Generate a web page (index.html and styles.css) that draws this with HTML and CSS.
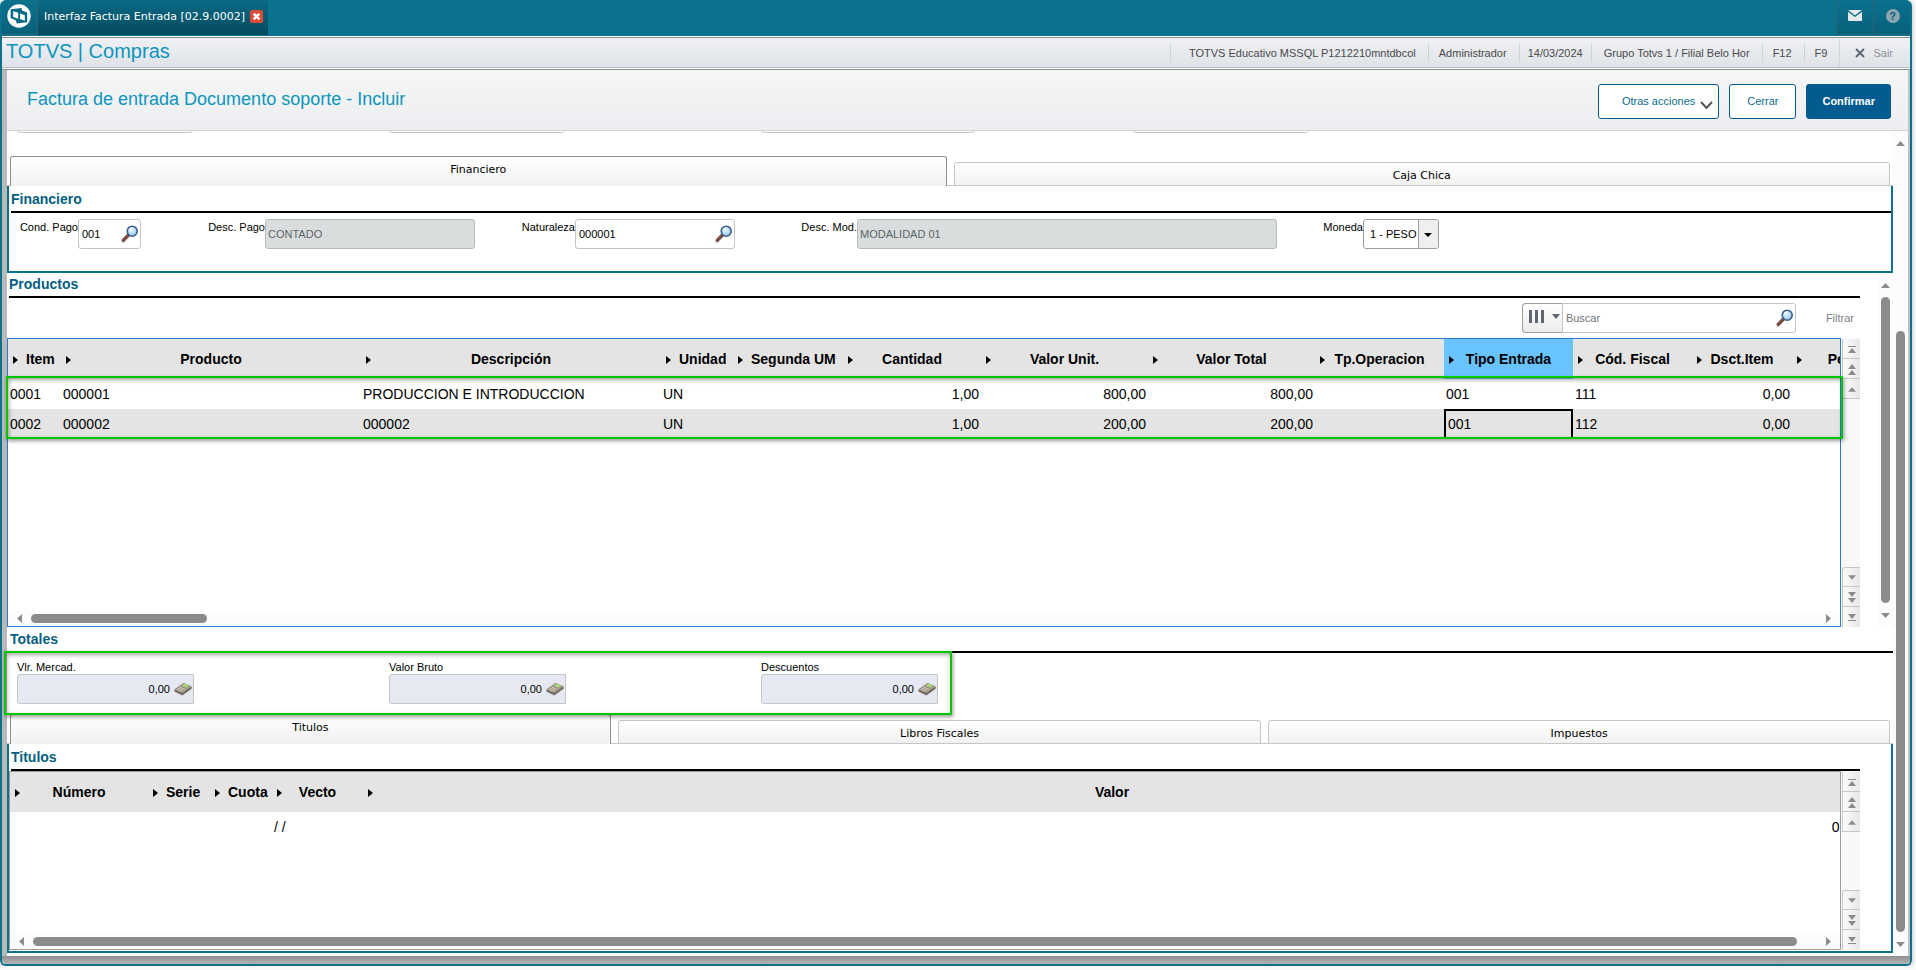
FILE: index.html
```html
<!DOCTYPE html>
<html lang="es">
	<head>
		<meta charset="UTF-8">
		<meta content="width=device-width, initial-scale=1.0" name="viewport">
		<title>TOTVS | Compras</title>
		<link rel="stylesheet" href="styles.css">
	</head>
	<body>
		<!-- shared icons -->
		<svg class="defs" width="0" height="0" aria-hidden="true">
			<defs>
				<radialGradient id="lens" cx=".45" cy=".4" r=".6">
					<stop offset="0" stop-color="#eef8ff"/>
					<stop offset="1" stop-color="#8fc3e8"/>
				</radialGradient>
			</defs>
			<symbol id="i-search" viewBox="0 0 18 18">
				<path d="M2 16.2l5-5.4" stroke="#00000030" stroke-width="4" stroke-linecap="round"/>
				<path d="M2.4 15.2l4.8-5" stroke="#6a4238" stroke-width="3.2" stroke-linecap="round"/>
				<path d="M2.2 14.6l4.4-4.6" stroke="#a0705c" stroke-width="1"/>
				<circle cx="11.2" cy="6.2" r="5" fill="url(#lens)" stroke="#3c5f8c" stroke-width="1.6"/>
				<path d="M8.4 5.6a3 3 0 0 1 3-2.6" stroke="#fff" stroke-width="1.2" fill="none"/>
			</symbol>
			<symbol id="i-calc" viewBox="0 0 18 14">
				<path d="M1 10l7 4 10-7-1-2z" fill="#00000030"/>
				<path d="M0.5 7.5L9.5 1l8 3.5v2l-9 6.5-8-3.5z" fill="#6e6458"/>
				<path d="M0.5 7.5L9.5 1l8 3.5-9 6.5z" fill="#a39a8c"/>
				<path d="M8 3.6l2.6-1.8 4.6 2-2.6 1.8z" fill="#a8e070"/>
				<path d="M4.4 6.4l4.6 2M6 5.3l4.6 2M3 7.6l4.6 2" stroke="#e4ded2" stroke-width="1" stroke-dasharray="1.4 .8"/>
			</symbol>
			<symbol id="i-up" viewBox="0 0 9 5"><path d="M0 5h9L4.5 0z"/></symbol>
			<symbol id="i-down" viewBox="0 0 9 5"><path d="M0 0h9L4.5 5z"/></symbol>
			<symbol id="i-left" viewBox="0 0 5 9"><path d="M5 0v9L0 4.5z"/></symbol>
			<symbol id="i-right" viewBox="0 0 5 9"><path d="M0 0v9l5-4.5z"/></symbol>
			<symbol id="i-first" viewBox="0 0 8 7"><path d="M0 0h8v1H0zM0 7h8L4 2z"/></symbol>
			<symbol id="i-last" viewBox="0 0 8 7"><path d="M0 6h8v1H0zM0 0h8L4 5z"/></symbol>
			<symbol id="i-up2" viewBox="0 0 8 11"><path d="M0 5h8L4 0zM0 11h8L4 6z"/></symbol>
			<symbol id="i-down2" viewBox="0 0 8 11"><path d="M0 0h8L4 5zM0 6h8l-4 5z"/></symbol>
		</svg>

		<div class="window">
			<header class="titlebar">
				<button class="tile" aria-label="Inicio">
					<svg width="24" height="24" viewBox="0 0 24 24">
						<circle cx="12" cy="12" r="11.7" fill="#fff"/>
						<path d="M3.6 5.2L14.6 4l.4 2.6 5.2 2v9.6l-10.6 1.2-.6-2.8-5.4-2.6z" fill="#0b6b87"/>
						<path d="M6.2 7.2l5 1.6v6l-5-1.8z" fill="#fff"/>
						<path d="M13 9.6l4.8 1.6v5.6L13 15z" fill="#fff"/>
						<path d="M12.4 6.6v11" stroke="#0b6b87" stroke-width="1.2"/>
					</svg>
				</button>
				<div class="apptab">
					<span>Interfaz Factura Entrada [02.9.0002]</span>
					<button class="close" aria-label="Cerrar pestaña">
						<svg width="13" height="13" viewBox="0 0 13 13">
							<rect width="13" height="13" rx="2.5" fill="#dd4b36"/>
							<path d="M3.6 3.6l5.8 5.8M9.4 3.6L3.6 9.4" stroke="#fff" stroke-width="2.4"/>
						</svg>
					</button>
				</div>
				<button class="tile mail" aria-label="Mensajes">
					<svg width="14" height="11" viewBox="0 0 14 11">
						<rect width="14" height="11" rx="1" fill="#e4eaec"/>
						<path d="M0 .8l7 5.4L14 .8" stroke="#0b6b87" stroke-width="1.4" fill="none"/>
					</svg>
				</button>
				<button class="tile" aria-label="Ayuda"><span class="help">?</span></button>
			</header>

			<div class="appbar">
				<h1>TOTVS | Compras</h1>
				<ul class="session">
					<li>TOTVS Educativo MSSQL P1212210mntdbcol</li>
					<li>Administrador</li>
					<li>14/03/2024</li>
					<li>Grupo Totvs 1 / Filial Belo Hor</li>
					<li>F12</li>
					<li>F9</li>
				</ul>
				<button class="exit">
					<svg width="10" height="10" viewBox="0 0 10 10"><path d="M1 1l8 8M9 1L1 9" stroke="#5f6774" stroke-width="2"/></svg>
					Sair
				</button>
			</div>

			<main class="sheet">
				<div class="pagehead">
					<h2>Factura de entrada Documento soporte - Incluir</h2>
					<button class="btn btn-more">Otras acciones
						<svg width="13" height="8" viewBox="0 0 13 8"><path d="M1 1l5.5 6L12 1" stroke="#555" stroke-width="2" fill="none"/></svg>
					</button>
					<button class="btn">Cerrar</button>
					<button class="btn btn-main">Confirmar</button>
				</div>

				<div class="scroller">
					<div class="content">
						<!-- fields scrolled out of view, only their lower edge shows -->
						<div class="fieldgrid scrolled">
							<input aria-label="Campo 1" readonly>
							<input aria-label="Campo 2" readonly>
							<input class="wide" aria-label="Campo 3" readonly>
							<input aria-label="Campo 4" readonly>
						</div>

						<div class="tabs" role="tablist">
							<button class="tab active" role="tab" aria-selected="true">Financiero</button>
							<button class="tab" role="tab">Caja Chica</button>
						</div>
						<section class="panel">
							<h3>Financiero</h3>
							<div class="form">
								<label for="cond">Cond. Pago</label>
								<div class="box"><input id="cond" value="001"><button aria-label="Buscar condición"><svg width="18" height="18"><use href="#i-search"/></svg></button></div>
								<label for="desc">Desc. Pago</label>
								<div class="box off"><input id="desc" value="CONTADO" readonly></div>
								<label for="nat">Naturaleza</label>
								<div class="box"><input id="nat" value="000001"><button aria-label="Buscar naturaleza"><svg width="18" height="18"><use href="#i-search"/></svg></button></div>
								<label for="mod">Desc. Mod.</label>
								<div class="box off"><input id="mod" value="MODALIDAD 01" readonly></div>
								<label for="moneda">Moneda</label>
								<div class="box picker"><select id="moneda"><option>1 - PESO</option></select></div>
							</div>
						</section>

						<section class="products">
							<div class="main">
								<h3>Productos</h3>
								<div class="toolbar">
									<button class="columns" aria-label="Columnas">
										<svg width="31" height="13" viewBox="0 0 31 13" fill="#5f6774"><path d="M0 0h3v13H0zM6 0h3v13H6zM12 0h3v13h-3zM23 4h8l-4 5z"/></svg>
									</button>
									<div class="box search"><input aria-label="Buscar" placeholder="Buscar"><button aria-label="Buscar producto"><svg width="18" height="18"><use href="#i-search"/></svg></button></div>
									<button class="filter">Filtrar</button>
								</div>
								<div class="gridwrap">
									<div class="grid focus">
										<div class="rows">
											<table>
												<colgroup>
													<col class="w53"><col class="w300"><col class="w300"><col class="w72"><col class="w110"><col class="w138"><col class="w167"><col class="w167"><col class="w129"><col class="w129"><col class="w119"><col class="w100"><col class="w105">
												</colgroup>
												<thead>
													<tr><th class="tight">Item</th><th>Producto</th><th>Descripción</th><th class="tight">Unidad</th><th class="tight">Segunda UM</th><th>Cantidad</th><th>Valor Unit.</th><th>Valor Total</th><th>Tp.Operacion</th><th class="sel">Tipo Entrada</th><th>Cód. Fiscal</th><th>Dsct.Item</th><th>Peso</th></tr>
												</thead>
												<tbody>
													<tr><td>0001</td><td>000001</td><td>PRODUCCION E INTRODUCCION</td><td>UN</td><td></td><td class="num">1,00</td><td class="num">800,00</td><td class="num">800,00</td><td></td><td>001</td><td>111</td><td class="num">0,00</td><td></td></tr>
													<tr><td>0002</td><td>000002</td><td>000002</td><td>UN</td><td></td><td class="num">1,00</td><td class="num">200,00</td><td class="num">200,00</td><td></td><td class="cursor">001</td><td>112</td><td class="num">0,00</td><td></td></tr>
												</tbody>
											</table>
										</div>
										<div class="hscroll">
											<button aria-label="Izquierda"><svg width="5" height="9"><use href="#i-left"/></svg></button>
											<div class="track"><div class="thumb" style="width: 9.85%"></div></div>
											<button aria-label="Derecha"><svg width="5" height="9"><use href="#i-right"/></svg></button>
										</div>
									</div>
									<div class="pager">
										<button aria-label="Primero"><svg width="8" height="7"><use href="#i-first"/></svg></button>
										<button aria-label="Página anterior"><svg width="8" height="11"><use href="#i-up2"/></svg></button>
										<button aria-label="Anterior"><svg width="8" height="5"><use href="#i-up"/></svg></button>
										<span></span>
										<button aria-label="Siguiente"><svg width="8" height="5"><use href="#i-down"/></svg></button>
										<button aria-label="Página siguiente"><svg width="8" height="11"><use href="#i-down2"/></svg></button>
										<button aria-label="Último"><svg width="8" height="7"><use href="#i-last"/></svg></button>
									</div>
									<div class="mark mark-rows"></div>
								</div>
							</div>
							<div class="vscroll">
								<button aria-label="Arriba"><svg width="9" height="5"><use href="#i-up"/></svg></button>
								<div class="track"><div class="thumb" style="height: 100%"></div></div>
								<button aria-label="Abajo"><svg width="9" height="5"><use href="#i-down"/></svg></button>
							</div>
						</section>

						<section class="totals">
							<h3>Totales</h3>
							<div class="fieldgrid">
								<div class="total">
									<label for="mercad">Vlr. Mercad.</label>
									<div class="box calc"><input id="mercad" value="0,00"><button aria-label="Calculadora"><svg width="18" height="14"><use href="#i-calc"/></svg></button></div>
								</div>
								<div class="total">
									<label for="bruto">Valor Bruto</label>
									<div class="box calc"><input id="bruto" value="0,00"><button aria-label="Calculadora"><svg width="18" height="14"><use href="#i-calc"/></svg></button></div>
								</div>
								<div class="total">
									<label for="descuentos">Descuentos</label>
									<div class="box calc"><input id="descuentos" value="0,00"><button aria-label="Calculadora"><svg width="18" height="14"><use href="#i-calc"/></svg></button></div>
								</div>
							</div>
							<div class="mark mark-totals"></div>
						</section>

						<div class="tabs tabs-low" role="tablist">
							<button class="tab active" role="tab" aria-selected="true">Titulos</button>
							<button class="tab" role="tab">Libros Fiscales</button>
							<button class="tab" role="tab">Impuestos</button>
						</div>
						<section class="panel panel-low">
							<h3>Titulos</h3>
							<div class="gridwrap low">
								<div class="grid">
									<div class="rows">
										<table>
											<colgroup><col class="w138"><col class="w62"><col class="w62"><col class="w91"><col class="rest"></colgroup>
											<thead>
												<tr><th>Número</th><th class="tight">Serie</th><th class="tight">Cuota</th><th>Vecto</th><th>Valor</th></tr>
											</thead>
											<tbody>
												<tr><td></td><td></td><td></td><td>/ /</td><td class="num">0,00</td></tr>
											</tbody>
										</table>
									</div>
									<div class="hscroll">
										<button aria-label="Izquierda"><svg width="5" height="9"><use href="#i-left"/></svg></button>
										<div class="track"><div class="thumb" style="width: 98.9%"></div></div>
										<button aria-label="Derecha"><svg width="5" height="9"><use href="#i-right"/></svg></button>
									</div>
								</div>
								<div class="pager">
									<button aria-label="Primero"><svg width="8" height="7"><use href="#i-first"/></svg></button>
									<button aria-label="Página anterior"><svg width="8" height="11"><use href="#i-up2"/></svg></button>
									<button aria-label="Anterior"><svg width="8" height="5"><use href="#i-up"/></svg></button>
									<span></span>
									<button aria-label="Siguiente"><svg width="8" height="5"><use href="#i-down"/></svg></button>
									<button aria-label="Página siguiente"><svg width="8" height="11"><use href="#i-down2"/></svg></button>
									<button aria-label="Último"><svg width="8" height="7"><use href="#i-last"/></svg></button>
								</div>
							</div>
						</section>
					</div>
					<div class="vscroll">
						<button aria-label="Arriba"><svg width="9" height="5"><use href="#i-up"/></svg></button>
						<div class="track end"><div class="thumb" style="height: 77.4%"></div></div>
						<button aria-label="Abajo"><svg width="9" height="5"><use href="#i-down"/></svg></button>
					</div>
				</div>
			</main>
		</div>
	</body>
</html>
```
FILE: styles.css
```css
* { box-sizing: border-box; }
body, h1, h2, h3, ul { margin: 0; padding: 0; }
body {
	background: #f9f9f9;
	color: #000;
	font: 11px/14px "Liberation Sans", Arial, sans-serif;
}
button, input, select {
	font: inherit;
	color: inherit;
	background: none;
	border: 0;
	border-radius: 0;
	margin: 0;
	padding: 0;
	min-width: 0;
}
svg { display: block; fill: #8b8b8b; }
.defs { position: absolute; }

.window {
	display: flex;
	flex-direction: column;
	min-height: calc(100vh - 4px);
	margin-right: 4px;
	border: 2px solid #0b728e;
	border-top: 0;
	border-radius: 6px;
	background: #fff;
	box-shadow: 0 1px 4px rgba(0, 0, 0, .3);
	overflow: hidden;
}

/* title bar */
.titlebar {
	display: flex;
	height: 36px;
	margin: 0 -2px;
	padding-bottom: 1px;
	background: #0b728e;
}
.tile {
	display: flex;
	align-items: center;
	justify-content: center;
	width: 38px;
	padding-bottom: 3px;
	border: 1px solid #2b6577;
	border-width: 0 1px 1px 0;
	background: linear-gradient(#0b728e, #08617a);
}
.mail {
	margin-left: auto;
	border-left-width: 1px;
}
.apptab {
	display: flex;
	align-items: center;
	gap: 5px;
	padding: 0 5px 2px 6px;
	background: linear-gradient(#0a6b86, #054a5d);
	color: #fff;
	font: 11px/14px "DejaVu Sans", Verdana, sans-serif;
}
.help {
	width: 14px;
	height: 14px;
	border-radius: 7px;
	background: #8ba6b0;
	color: #0b5b73;
	font-weight: bold;
}

/* application bar */
.appbar {
	display: flex;
	align-items: center;
	height: 34px;
	border-top: 1px solid #fff;
	border-bottom: 1px solid #8c8e90;
	background: linear-gradient(#8c8e90 1px, #eff0f4 1px, #dfe3e8 30px, #b9bdbf 30px, #b9bdbf 31px, #fff 31px);
}
h1, h2 {
	color: #0d95bd;
	font-weight: normal;
}
h1 {
	flex: 1;
	padding: 0 0 4px 4px;
	font-size: 20px;
	line-height: 24px;
}
.session {
	display: flex;
	list-style: none;
	color: #4a4a4a;
}
.session li {
	padding: 2px 12px 2px 10px;
	border-left: 1px solid #d0d3d8;
}
.session li:first-child { padding-left: 18px; }
.session li:nth-child(3) { padding: 2px 8px; }
.session li:nth-child(4) { padding: 2px 12px; }
.exit {
	display: flex;
	align-items: center;
	gap: 8px;
	height: 28px;
	padding: 0 17px 0 15px;
	border-left: 1px solid #d0d3d8;
	color: #8f9398;
}

/* sheet */
.sheet {
	flex: 1;
	display: flex;
	flex-direction: column;
	padding: 0 2px 8px 5px;
	background: linear-gradient(transparent calc(100% - 8px), #8e8e8e calc(100% - 8px), #b4b4b4), linear-gradient(90deg, #b9b9b9, #c2c2c2);
}
.pagehead {
	display: flex;
	align-items: center;
	gap: 10px;
	height: 61px;
	padding: 2px 17px 0 20px;
	border-bottom: 1px solid #d2d3d4;
	background: linear-gradient(#f5f7f6, #ecedf0);
}
h2 {
	flex: 1;
	padding-bottom: 4px;
	font-size: 18px;
	line-height: 20px;
}
.btn {
	height: 35px;
	padding: 0 17px;
	border: 1px solid #045b8f;
	border-radius: 3px;
	background: #fff;
	color: #0d6c8c;
}
.btn-more {
	display: flex;
	align-items: center;
	gap: 5px;
	padding: 0 5px 0 23px;
}
.btn-more svg { margin-top: 8px; }
.btn-main {
	padding: 0 15px;
	background: #045b8f;
	color: #fff;
	font-weight: bold;
}
.scroller {
	flex: 1;
	display: flex;
	background: #fff;
}
.content {
	flex: 1;
	min-width: 0;
}

/* fields */
.fieldgrid {
	display: grid;
	grid-template-columns: repeat(4, 372px);
	padding-left: 10px;
}
.scrolled {
	height: 2px;
	margin-bottom: 23px;
	align-items: end;
	align-content: end;
	overflow: hidden;
}
.scrolled input {
	width: 176px;
	height: 30px;
	border: 1px solid #c4c7cb;
	border-radius: 3px;
}
.scrolled .wide { width: 214px; }
.box {
	display: flex;
	align-items: center;
	height: 30px;
	padding: 0 1px 0 3px;
	border: 1px solid #c2c4c6;
	border-radius: 3px;
	background: #fff;
}
.box input {
	flex: 1;
	width: 0;
}
.box input::placeholder {
	color: #6f7478;
	opacity: 1;
}
.off {
	padding-left: 2px;
	border-color: #b4babb;
	background: #d9dddd;
	color: #5c6669;
}
.calc {
	width: 177px;
	border-radius: 3px 0 0 3px;
	background: #e6e9f2;
}
.calc input {
	padding-right: 4px;
	text-align: right;
}
.picker {
	position: relative;
	padding: 0;
	border-color: #9b9fa2;
}
.picker select {
	appearance: none;
	flex: 1;
	height: 28px;
	padding-left: 6px;
	border-radius: 3px;
	background: linear-gradient(90deg, transparent calc(100% - 20px), #9b9fa2 calc(100% - 20px), #9b9fa2 calc(100% - 19px), #efefef calc(100% - 19px));
}
.picker::after {
	content: "";
	position: absolute;
	right: 6px;
	top: 13px;
	border: 4px solid transparent;
	border-top-color: #000;
	border-bottom: 0;
	pointer-events: none;
}

/* tabs and panels */
.tabs {
	display: flex;
	align-items: flex-end;
	gap: 7px;
	height: 30px;
	padding: 0 3px;
	background: linear-gradient(#c6c6c6, #c6c6c6) left bottom / 100% 1px no-repeat;
}
.tab {
	flex: 1;
	height: 24px;
	padding-top: 3px;
	border: 1px solid #c6c6c6;
	border-radius: 3px 3px 0 0;
	background: linear-gradient(#fff, #f1f1f1);
	font: 11px/14px "DejaVu Sans", Verdana, sans-serif;
}
.tab.active {
	height: 30px;
	padding: 0 0 3px;
	border-color: #8f8f8f;
	border-bottom: 0;
}
.tabs-low .tab:nth-child(1) { flex: 601; }
.tabs-low .tab:nth-child(2) { flex: 644; }
.tabs-low .tab:nth-child(3) { flex: 622; }
.panel {
	border: 2px solid #0b728e;
	border-top: 0;
}
h3 {
	margin-left: 2px;
	padding: 3px 0 4px;
	border-bottom: 2px solid #000;
	color: #05607f;
	font-size: 14px;
	line-height: 16px;
}
.panel h3 { padding: 5px 0 4px; }
.form {
	display: grid;
	grid-template-columns: 69px 63px 124px 210fr 100px 160px 122px 420fr 86px 76px 452fr;
	padding: 6px 0 22px;
}
.form label {
	padding-top: 1px;
	text-align: right;
}

/* products */
.products { display: flex; }
.main {
	flex: 1;
	min-width: 0;
	margin-right: 18px;
}
.toolbar {
	display: flex;
	justify-content: flex-end;
	padding: 5px 6px 5px 0;
}
.columns {
	display: flex;
	align-items: center;
	width: 40px;
	height: 30px;
	padding: 0 0 3px 6px;
	border: 1px solid #9b9fa2;
	border-right-width: 0;
	border-radius: 4px 0 0 4px;
	background: linear-gradient(#fff, #ececee);
}
.columns svg { fill: #5f6774; }
.search {
	width: 234px;
	border-radius: 0 3px 3px 0;
}
.filter {
	margin-left: 30px;
	color: #7b8084;
}

/* grids */
.gridwrap {
	position: relative;
	display: flex;
	gap: 1px;
	height: 289px;
}
.grid {
	flex: 1;
	min-width: 0;
	display: flex;
	flex-direction: column;
	border: 1px solid #9a9a9a;
}
.grid.focus { border-color: #2a7bd0; }
.rows {
	flex: 1;
	overflow: hidden;
}
table {
	table-layout: fixed;
	width: 0;
	border-collapse: collapse;
	font-size: 14px;
	line-height: 16px;
}
.w53 { width: 53px; }
.w62 { width: 62px; }
.w72 { width: 72px; }
.w91 { width: 91px; }
.w100 { width: 100px; }
.w105 { width: 105px; }
.w110 { width: 110px; }
.w119 { width: 119px; }
.w129 { width: 129px; }
.w138 { width: 138px; }
.w167 { width: 167px; }
.w300 { width: 300px; }
.rest { width: 1498px; }
th {
	position: relative;
	height: 40px;
	padding: 0;
	background: #e4e4e4;
	white-space: nowrap;
}
th::before {
	content: "";
	position: absolute;
	left: 5px;
	top: 17px;
	border: 4px solid transparent;
	border-left: 5px solid #000;
	border-right: 0;
}
th.tight {
	padding-left: 18px;
	text-align: left;
}
th.sel { background: #69c3fe; }
td {
	height: 30px;
	padding: 0 2px;
	white-space: nowrap;
}
tbody tr:nth-child(even) { background: #e4e4e4; }
.num { text-align: right; }
.cursor { box-shadow: inset 0 0 0 2px #000; padding-left: 4px; }

.pager {
	display: flex;
	flex-direction: column;
	width: 18px;
	padding-top: 1px;
	background: #f8f8fb;
}
.pager button {
	display: flex;
	align-items: center;
	justify-content: center;
	height: 20px;
	padding-top: 1px;
	border: 1px solid #c4c6c8;
	border-width: 0 0 1px 1px;
	background: linear-gradient(90deg, #fbfbfb, #e6e7e9);
}
.pager span { flex: 1; }
.pager span + button {
	border-top-width: 1px;
	border-radius: 3px 0 0 0;
}
.pager button:last-child { border-bottom: 0; }

/* scroll bars */
.hscroll, .vscroll {
	display: flex;
	background: #fcfcfc;
}
.hscroll { height: 15px; }
.vscroll {
	flex-direction: column;
	width: 15px;
}
.hscroll button, .vscroll button {
	display: flex;
	align-items: center;
	justify-content: center;
}
.hscroll button { width: 23px; }
.vscroll button { height: 24px; }
.track {
	flex: 1;
	display: flex;
}
.vscroll .track {
	flex-direction: column;
	align-items: center;
}
.hscroll .track { align-items: center; }
.track.end { justify-content: flex-end; }
.thumb {
	border-radius: 5px;
	background: #8b8b8b;
}
.hscroll .thumb { height: 9px; }
.vscroll .thumb { width: 9px; }

/* totals */
.totals { position: relative; }
.totals h3 { padding: 4px 0 4px 1px; }
.totals .fieldgrid { padding-top: 7px; padding-bottom: 10px; }
.total label { display: block; }

/* green call-outs over the form */
.mark {
	position: absolute;
	border: 2px solid #00c800;
	box-shadow: 1px 2px 4px rgba(0, 0, 0, .4), inset 1px 2px 4px rgba(0, 0, 0, .35);
	pointer-events: none;
}
.mark-rows {
	top: 38px;
	left: -1px;
	right: 17px;
	height: 63px;
}
.mark-totals {
	top: 24px;
	left: -3px;
	width: 948px;
	height: 64px;
}

.panel-low { margin-bottom: 3px; }
.panel-low h3 { margin-right: 31px; }
.low {
	height: 179px;
	margin: 0 31px 1px 0;
}
```
